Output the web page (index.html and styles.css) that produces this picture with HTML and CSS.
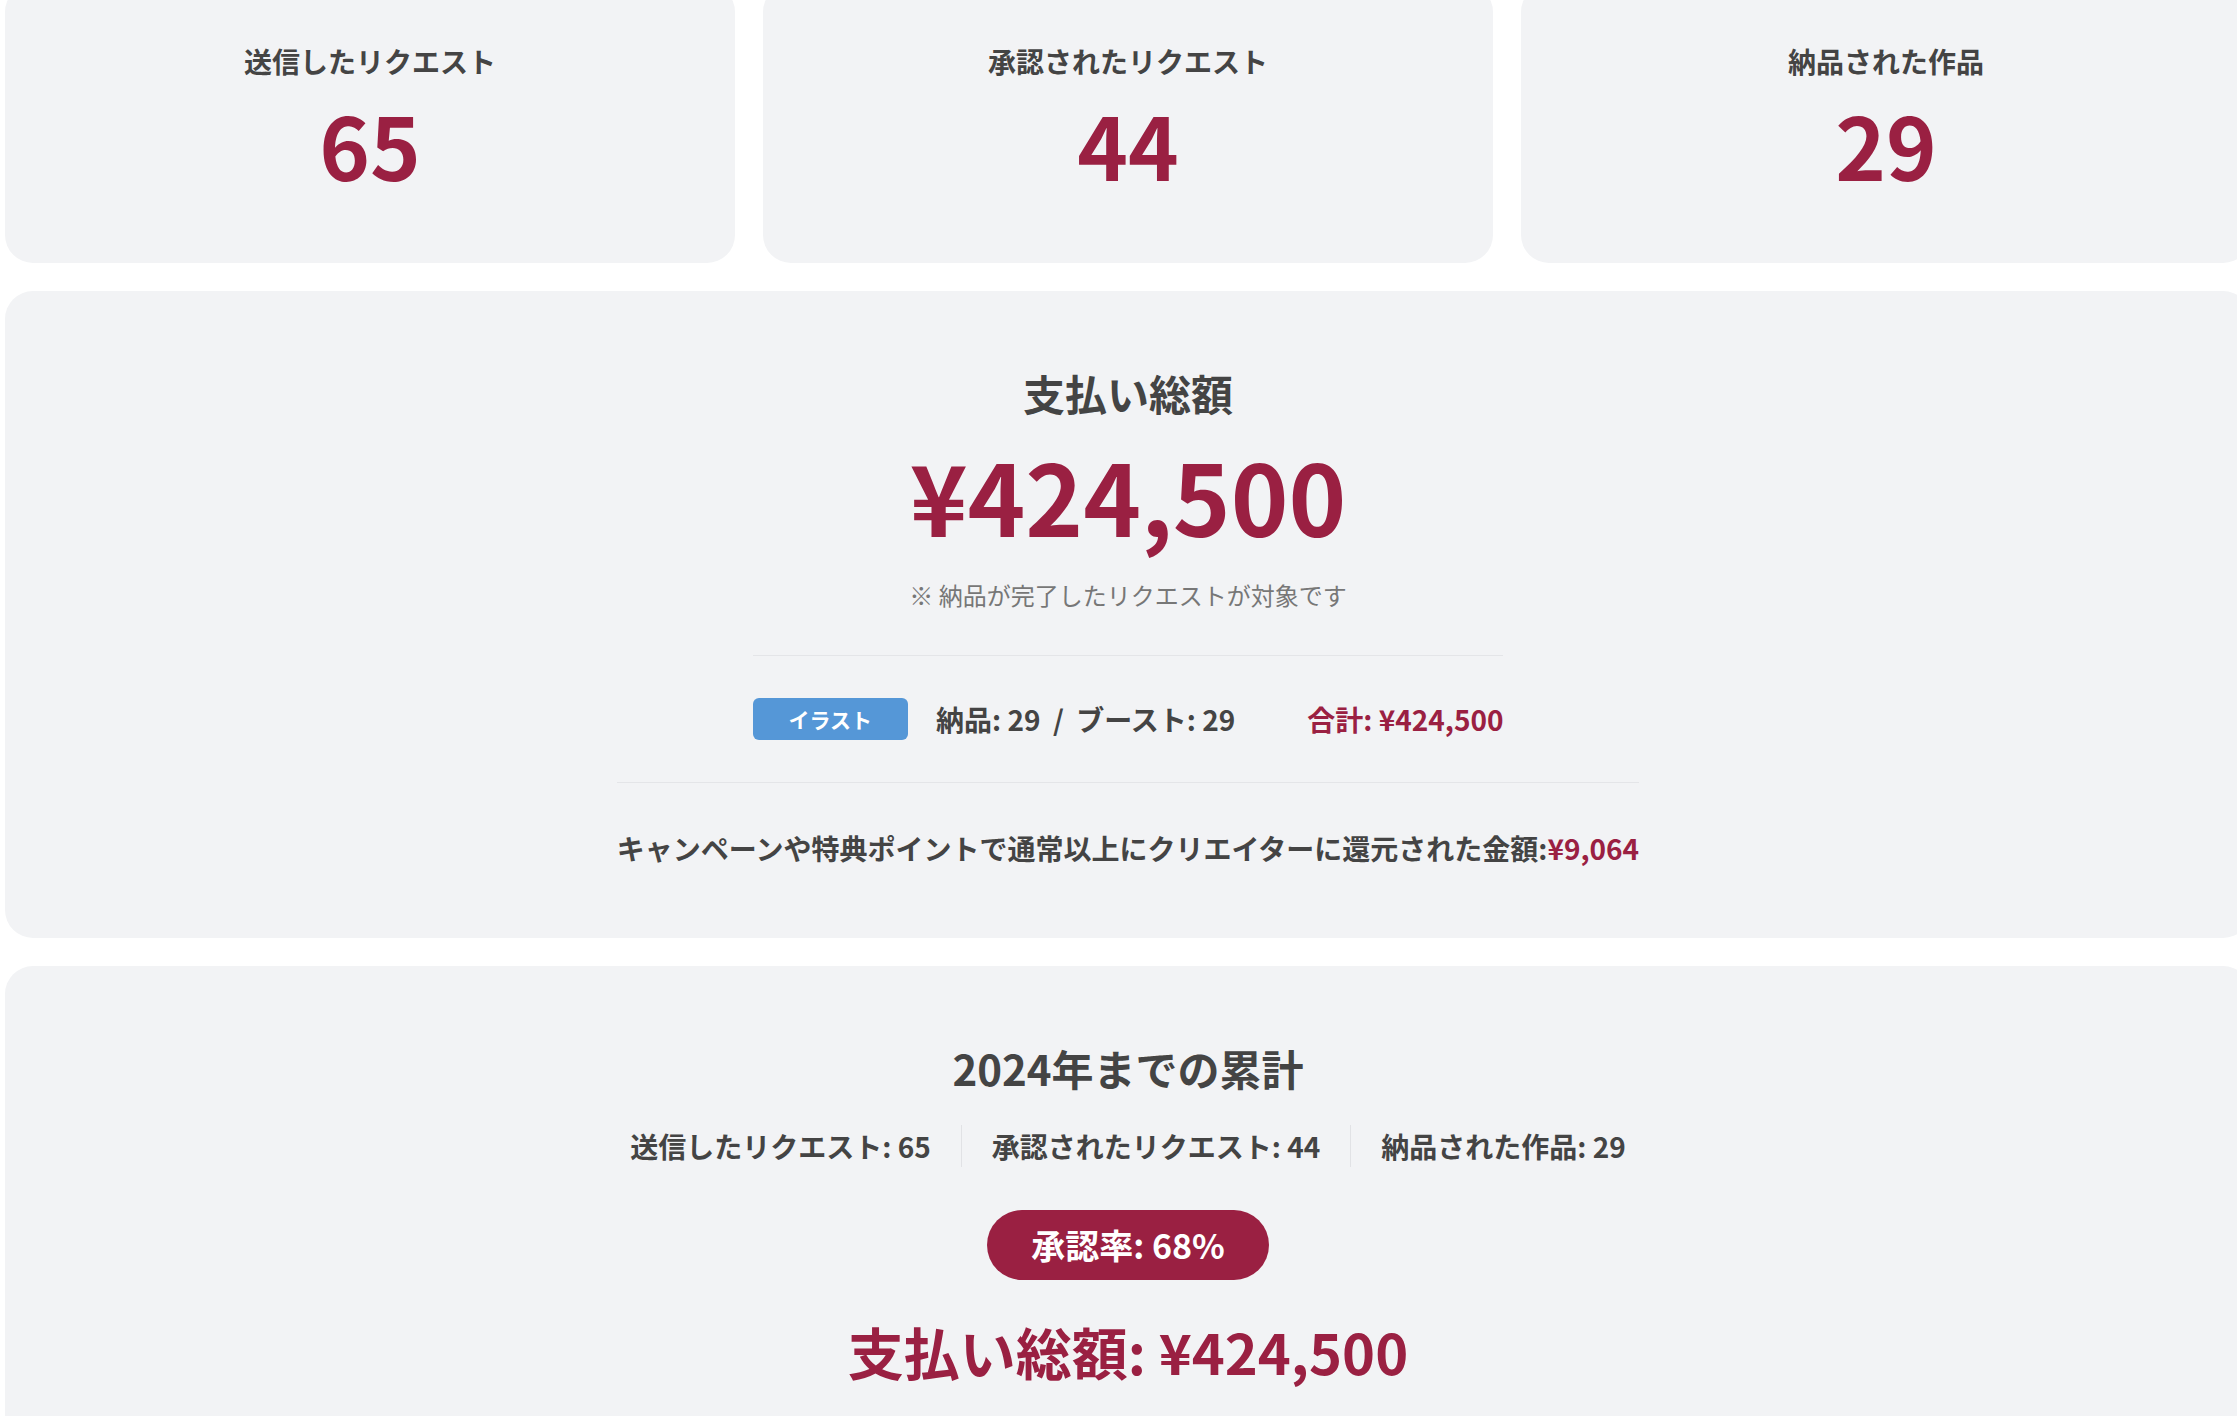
FILE: index.html
```html
<!DOCTYPE html>
<html lang="ja">
<head>
    <meta charset="UTF-8">
    <meta name="viewport" content="width=device-width, initial-scale=1.0">
    <title>リクエスト実績</title>
    <link rel="stylesheet" href="styles.css">
</head>
<body>
    <div class="page">

        <!-- summary counts -->
        <div class="stat-grid">
            <div class="stat-card">
                <div class="stat-label">送信したリクエスト</div>
                <div class="stat-value">65</div>
            </div>
            <div class="stat-card">
                <div class="stat-label">承認されたリクエスト</div>
                <div class="stat-value">44</div>
            </div>
            <div class="stat-card">
                <div class="stat-label">納品された作品</div>
                <div class="stat-value">29</div>
            </div>
        </div>

        <!-- payment total -->
        <div class="panel">
            <h2 class="panel-title">支払い総額</h2>
            <div class="total-amount">¥424,500</div>
            <p class="total-note">※ 納品が完了したリクエストが対象です</p>

            <div class="breakdown">
                <div class="breakdown-row">
                    <span class="type-badge">イラスト</span>
                    <span class="breakdown-counts">納品: 29 <span class="slash">/</span> ブースト: 29</span>
                    <span class="breakdown-total">合計: ¥424,500</span>
                </div>
            </div>

            <p class="campaign-note">キャンペーンや特典ポイントで通常以上にクリエイターに還元された金額:<span class="accent">¥9,064</span></p>
        </div>

        <!-- yearly summary -->
        <div class="panel">
            <h2 class="panel-title">2024年までの累計</h2>
            <div class="year-stats">
                <span class="year-stat">送信したリクエスト: 65</span>
                <span class="year-stat">承認されたリクエスト: 44</span>
                <span class="year-stat">納品された作品: 29</span>
            </div>
            <div class="rate-pill">承認率: 68%</div>
            <div class="year-total">支払い総額: ¥424,500</div>
        </div>

    </div>
</body>
</html>
```

FILE: styles.css
```css
html, body {
    margin: 0;
    overflow: hidden;
}
body {
    font-family: "Noto Sans CJK JP", "Noto Sans", sans-serif;
    color: #444;
    background: #fff;
}
.page {
    width: 2246px;
    margin-top: -16px;
    padding-left: 5px;
    display: flex;
    flex-direction: column;
    gap: 28px;
}

/* summary counts */
.stat-grid {
    display: grid;
    grid-template-columns: repeat(3, 1fr);
    gap: 28px;
}
.stat-card {
    background: #f2f3f5;
    border-radius: 28px;
    padding: 56px 0 66px;
    text-align: center;
}
.stat-label {
    font-size: 28px;
    font-weight: 700;
    line-height: 42px;
}
.stat-value {
    margin-top: 9px;
    font-size: 86px;
    font-weight: 700;
    line-height: 106px;
    color: #9a2042;
}

/* panels */
.panel {
    background: #f2f3f5;
    border-radius: 28px;
    padding: 72px 0 69px;
    display: flex;
    flex-direction: column;
    align-items: center;
}
.panel-title {
    margin: 0;
    font-size: 42px;
    font-weight: 700;
    line-height: 59px;
}
.total-amount {
    margin-top: 12px;
    font-size: 98px;
    font-weight: 700;
    line-height: 120px;
    color: #9a2042;
}
.total-note {
    margin: 23px 0 0;
    font-size: 24px;
    line-height: 36px;
    color: #777;
}
.breakdown {
    margin-top: 42px;
    padding: 42px 0;
    border-top: 1px solid #e4e5e8;
}
.breakdown-row {
    display: flex;
    align-items: center;
    gap: 28px;
    font-size: 28px;
    font-weight: 700;
    line-height: 42px;
}
.type-badge {
    background: #5597d7;
    color: #fff;
    font-size: 21px;
    line-height: 42px;
    padding: 0 36px;
    border-radius: 6px;
}
.slash {
    margin: 0 6px;
}
.breakdown-total {
    margin-left: 44px;
    color: #9a2042;
}
.campaign-note {
    margin: 0;
    padding-top: 44px;
    border-top: 1px solid #e4e5e8;
    font-size: 28px;
    font-weight: 700;
    line-height: 42px;
}
.accent {
    color: #9a2042;
}

/* yearly summary */
.year-stats {
    margin-top: 28px;
    display: flex;
    font-size: 28px;
    font-weight: 700;
    line-height: 42px;
}
.year-stat {
    padding: 0 30px;
}
.year-stat + .year-stat {
    border-left: 1px solid #e1e2e5;
}
.rate-pill {
    margin-top: 43px;
    background: #9a2042;
    color: #fff;
    font-size: 34px;
    font-weight: 700;
    line-height: 50px;
    padding: 10px 44px;
    border-radius: 35px;
}
.year-total {
    margin-top: 34px;
    font-size: 56px;
    font-weight: 700;
    line-height: 73px;
    color: #9a2042;
}
```
